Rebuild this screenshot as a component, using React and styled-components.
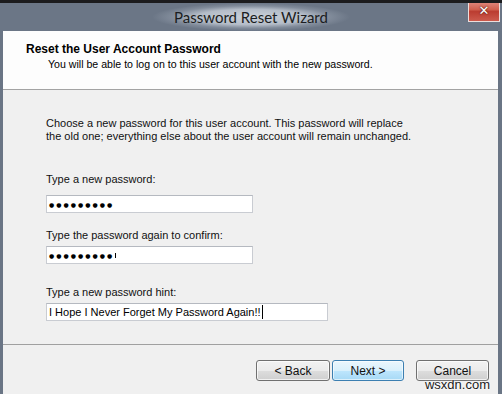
import React from 'react';
import styled, { createGlobalStyle } from 'styled-components';

const GlobalStyle = createGlobalStyle`
  html, body {
    margin: 0;
    padding: 0;
    background: #6a7585;
  }
  body {
    font-family: "Liberation Sans", Arial, sans-serif;
  }
`;

const Window = styled.div`
  position: relative;
  width: 502px;
  height: 394px;
  display: flex;
  flex-direction: column;
  background: #6a7585;
  border-top: 3px solid #1c1c1e;
  box-sizing: border-box;
  overflow: hidden;
`;

const TitleBar = styled.div`
  height: 28px;
  display: grid;
  grid-template-columns: 1fr auto 1fr;
  align-items: center;
  background: #6b7686;
`;

const Title = styled.div`
  grid-column: 2;
  font-family: Lato, "Open Sans", sans-serif;
  font-size: 15px;
  line-height: 18px;
  color: #1b1d21;
  padding: 5px 22px 5px;
  background: radial-gradient(closest-side, rgba(208, 214, 222, 0.95) 0%, rgba(188, 196, 207, 0.9) 55%, rgba(150, 160, 174, 0.5) 80%, rgba(107, 118, 134, 0) 100%);
`;

const CloseButton = styled.div`
  grid-column: 3;
  justify-self: end;
  align-self: start;
  margin-top: -3px;
  margin-right: 2px;
  width: 32px;
  height: 22px;
  box-sizing: border-box;
  border: 1px solid #ecdedc;
  border-top: none;
  background: linear-gradient(#e4938a 0%, #d0604f 45%, #bb3d31 55%, #cc5a4d 100%);
  display: flex;
  align-items: center;
  justify-content: center;
  color: #fff;
  font-family: "DejaVu Sans", sans-serif;
  font-weight: bold;
  font-size: 13px;
  text-shadow: 0 0 1px #5a1a14, 0 0 2px #5a1a14;
`;

const Client = styled.div`
  flex: 1;
  margin: 0 4px 0 3px;
  background: #f0f0f0;
  display: flex;
  flex-direction: column;
`;

const Header = styled.div`
  height: 59px;
  background: #fdfdfd;
  border-bottom: 1px solid #a3a3a3;
  padding: 11px 0 0 23px;
  box-sizing: border-box;
  font-size: 10.6px;
  line-height: 15px;
  color: #000;
`;

const HeaderTitle = styled.div`
  font-weight: bold;
  font-size: 12px;
`;

const HeaderSub = styled.div`
  margin-left: 22px;
`;

const Body = styled.div`
  height: 255px;
  padding: 27px 0 0 43px;
  box-sizing: border-box;
  border-bottom: 1px solid #a0a0a0;
  font-size: 11px;
  line-height: 13px;
  color: #111;
`;

const Para = styled.p`
  margin: 0;
`;

const Field = styled.div`
  margin-top: ${p => p.$top}px;
`;

const Label = styled.div`
  margin-bottom: ${p => p.$gap}px;
`;

const Input = styled.div`
  width: ${p => p.$width}px;
  height: 18px;
  box-sizing: border-box;
  border: 1px solid #c9ccd2;
  border-top-color: #b5b9c0;
  background: #fff;
  display: flex;
  align-items: center;
  padding-left: 2px;
  font-size: 11px;
  color: #000;
`;

const Dots = styled.span`
  font-family: "DejaVu Sans", sans-serif;
  font-size: 6px;
  letter-spacing: 2px;
`;

const Caret = styled.span`
  display: inline-block;
  width: 1px;
  height: ${p => p.$h}px;
  background: #000;
  margin-left: 1px;
`;

const Footer = styled.div`
  flex: 1;
  display: flex;
  justify-content: flex-end;
  align-items: flex-start;
  padding: 15px 9px 0 0;
  gap: 2px;
`;

const Button = styled.div`
  width: ${p => p.$w}px;
  height: 21px;
  box-sizing: border-box;
  margin-left: ${p => p.$ml || 0}px;
  border: 1px solid ${p => (p.$focus ? '#3c7fb1' : '#707070')};
  border-radius: 3px;
  background: ${p => (p.$focus
    ? 'linear-gradient(#eaf6fd 0%, #d9f0fc 50%, #bee6fd 51%, #a7d9f5 100%)'
    : 'linear-gradient(#f2f2f2 0%, #ebebeb 50%, #dddddd 51%, #cfcfcf 100%)')};
  box-shadow: inset 0 0 0 1px ${p => (p.$focus ? 'rgba(255,255,255,0.6)' : 'rgba(255,255,255,0.7)')};
  display: flex;
  align-items: center;
  justify-content: center;
  font-size: 12px;
  color: #111;
`;

const Watermark = styled.div`
  position: absolute;
  right: 12px;
  bottom: 2px;
  font-size: 13px;
  color: #1a1a1a;
  text-shadow: 0 0 2px #fff, 0 0 2px #fff;
`;

export default function App() {
  return (
    <>
      <GlobalStyle />
      <Window>
        <TitleBar>
          <Title>Password Reset Wizard</Title>
          <CloseButton>✕</CloseButton>
        </TitleBar>
        <Client>
          <Header>
            <HeaderTitle>Reset the User Account Password</HeaderTitle>
            <HeaderSub>You will be able to log on to this user account with the new password.</HeaderSub>
          </Header>
          <Body>
            <Para>
              Choose a new password for this user account. This password will replace
              <br />
              the old one; everything else about the user account will remain unchanged.
            </Para>
            <Field $top={30}>
              <Label $gap={9}>Type a new password:</Label>
              <Input $width={207}>
                <Dots>●●●●●●●●●</Dots>
              </Input>
            </Field>
            <Field $top={16}>
              <Label $gap={4}>Type the password again to confirm:</Label>
              <Input $width={207}>
                <Dots>●●●●●●●●●</Dots>
                <Caret $h={5} />
              </Input>
            </Field>
            <Field $top={22}>
              <Label $gap={4}>Type a new password hint:</Label>
              <Input $width={282}>
                I Hope I Never Forget My Password Again!!
                <Caret $h={14} />
              </Input>
            </Field>
          </Body>
          <Footer>
            <Button $w={74}>&lt; Back</Button>
            <Button $w={72} $focus>Next &gt;</Button>
            <Button $w={73} $ml={10}>Cancel</Button>
          </Footer>
        </Client>
        <Watermark>wsxdn.com</Watermark>
      </Window>
    </>
  );
}
